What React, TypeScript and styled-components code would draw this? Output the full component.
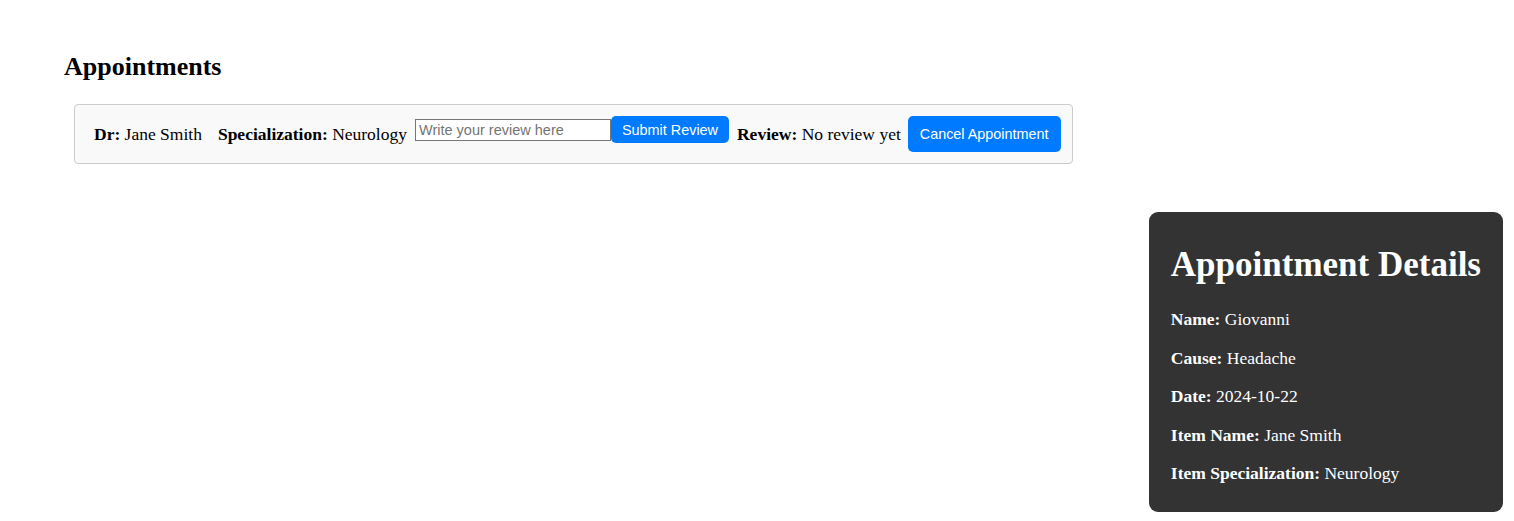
import React from 'react'
import styled, { createGlobalStyle } from 'styled-components'

const GlobalStyle = createGlobalStyle`
   html, body {
      margin: 0;
      padding: 0;
      background: #fff;
   }
   body {
      font-family: "Liberation Serif", "Times New Roman", serif;
      color: #000;
   }
`

export const Page = styled.div`
   padding: 52px 0 0 64px;
`
export const Title = styled.h2`
   margin: 0 0 22px;
   font-size: 26px;
   line-height: 30px;
   font-weight: bold;
`
export const AppointmentList = styled.ul`
   list-style: none;
   margin: 0 0 0 10px;
   padding: 0;
`
export const AppointmentCard = styled.li`
   box-sizing: border-box;
   display: flex;
   align-items: center;
   width: 999px;
   height: 60px;
   padding: 0 19px;
   background: #f9f9f9;
   border: 1px solid #ccc;
   border-radius: 4px;
   font-size: 17.5px;
`
export const Field = styled.span<{ $gap?: number }>`
   margin-right: ${p => p.$gap ?? 8}px;
   white-space: nowrap;
   & b {
      font-weight: bold;
   }
`
export const ReviewForm = styled.form`
   display: flex;
   align-items: center;
   margin: 0 8px 9px 0;
`
export const ReviewInput = styled.input`
   box-sizing: border-box;
   width: 196px;
   height: 22px;
   padding: 1px 3px;
   border: 1px solid #767676;
   border-radius: 0;
   font-family: "Liberation Sans", Arial, sans-serif;
   font-size: 14.5px;
   color: #000;
   background: #fff;
   &::placeholder {
      color: #757575;
   }
`
export const Button = styled.button<{ $tall?: boolean }>`
   box-sizing: border-box;
   height: ${p => (p.$tall ? 36 : 27)}px;
   padding: 0 ${p => (p.$tall ? 12 : 11)}px;
   border: none;
   border-radius: 5px;
   background: #007bff;
   color: #fff;
   font-family: "Liberation Sans", Arial, sans-serif;
   font-size: 14.4px;
   white-space: nowrap;
   cursor: pointer;
`
export const DetailsPopup = styled.aside`
   position: fixed;
   right: 11px;
   bottom: 9px;
   padding: 10px 22px;
   background: #333;
   color: #fff;
   border-radius: 9px;
`
export const DetailsTitle = styled.h1`
   margin: 23.6px 0;
   font-size: 35px;
   line-height: 40px;
   font-weight: bold;
   white-space: nowrap;
`
export const DetailsRow = styled.p`
   margin: 17.6px 0;
   font-size: 17.5px;
   line-height: 21px;
`

type Appointment = {
   doctor: string
   specialization: string
   review?: string
}

const appointments: Appointment[] = [
   { doctor: 'Jane Smith', specialization: 'Neurology' }
]

const details = [
   ['Name', 'Giovanni'],
   ['Cause', 'Headache'],
   ['Date', '2024-10-22'],
   ['Item Name', 'Jane Smith'],
   ['Item Specialization', 'Neurology']
]

const App: React.FC = () => {
   return (
      <>
         <GlobalStyle />
         <Page>
            <Title>Appointments</Title>
            <AppointmentList>
               {appointments.map(a => (
                  <AppointmentCard key={a.doctor}>
                     <Field $gap={16}><b>Dr:</b> {a.doctor}</Field>
                     <Field><b>Specialization:</b> {a.specialization}</Field>
                     <ReviewForm onSubmit={e => e.preventDefault()}>
                        <ReviewInput type='text' placeholder='Write your review here' />
                        <Button type='submit'>Submit Review</Button>
                     </ReviewForm>
                     <Field $gap={7}><b>Review:</b> {a.review ?? 'No review yet'}</Field>
                     <Button $tall>Cancel Appointment</Button>
                  </AppointmentCard>
               ))}
            </AppointmentList>
         </Page>

         <DetailsPopup>
            <DetailsTitle>Appointment Details</DetailsTitle>
            {details.map(([label, value]) => (
               <DetailsRow key={label}><b>{label}:</b> {value}</DetailsRow>
            ))}
         </DetailsPopup>
      </>
   )
}
export default App
